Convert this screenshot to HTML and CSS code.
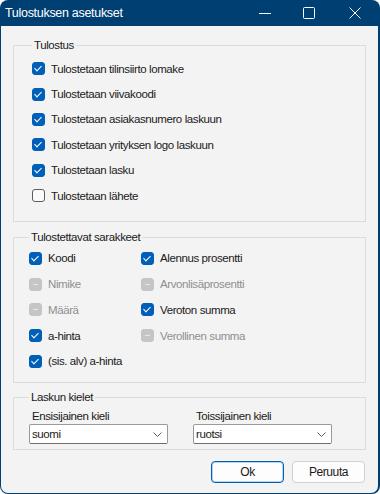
FILE: index.html
```html
<!DOCTYPE html>
<html lang="fi">
<head>
  <meta charset="UTF-8">
  <meta name="viewport" content="width=device-width, initial-scale=1.0">
  <title>Tulostuksen asetukset</title>
  <link rel="stylesheet" href="styles.css">
</head>
<body>
  <div class="window">
    <div class="titlebar">
      <span class="title">Tulostuksen asetukset</span>
      <div class="controls">
        <span class="ctl min"><svg width="12" height="12" viewBox="0 0 12 12"><path d="M0 6.5h12" stroke="#fff" stroke-width="1"/></svg></span>
        <span class="ctl max"><svg width="12" height="12" viewBox="0 0 12 12"><rect x="0.5" y="0.5" width="11" height="11" rx="1" fill="none" stroke="#fff" stroke-width="1"/></svg></span>
        <span class="ctl close"><svg width="12" height="12" viewBox="0 0 12 12"><path d="M0.5 0.5l11 11M11.5 0.5l-11 11" stroke="#fff" stroke-width="1"/></svg></span>
      </div>
    </div>

    <div class="content">
      <fieldset class="group print">
        <legend>Tulostus</legend>
        <label class="check"><span class="box on"></span>Tulostetaan tilinsiirto lomake</label>
        <label class="check"><span class="box on"></span>Tulostetaan viivakoodi</label>
        <label class="check"><span class="box on"></span>Tulostetaan asiakasnumero laskuun</label>
        <label class="check"><span class="box on"></span>Tulostetaan yrityksen logo laskuun</label>
        <label class="check"><span class="box on"></span>Tulostetaan lasku</label>
        <label class="check"><span class="box"></span>Tulostetaan lähete</label>
      </fieldset>

      <fieldset class="group columns">
        <legend>Tulostettavat sarakkeet</legend>
        <div class="col col-left">
          <label class="check"><span class="box on"></span>Koodi</label>
          <label class="check disabled"><span class="box dis"></span>Nimike</label>
          <label class="check disabled"><span class="box dis"></span>Määrä</label>
          <label class="check"><span class="box on"></span>a-hinta</label>
          <label class="check"><span class="box on"></span>(sis. alv) a-hinta</label>
        </div>
        <div class="col">
          <label class="check"><span class="box on"></span>Alennus prosentti</label>
          <label class="check disabled"><span class="box dis"></span>Arvonlisäprosentti</label>
          <label class="check"><span class="box on"></span>Veroton summa</label>
          <label class="check disabled"><span class="box dis"></span>Verollinen summa</label>
        </div>
      </fieldset>

      <fieldset class="group langs">
        <legend>Laskun kielet</legend>
        <div class="field">
          <span class="field-label">Ensisijainen kieli</span>
          <div class="select">suomi<svg width="9" height="5" viewBox="0 0 9 5"><path d="M0.5 0.5l4 4 4-4" fill="none" stroke="#606060" stroke-width="1"/></svg></div>
        </div>
        <div class="field">
          <span class="field-label">Toissijainen kieli</span>
          <div class="select">ruotsi<svg width="9" height="5" viewBox="0 0 9 5"><path d="M0.5 0.5l4 4 4-4" fill="none" stroke="#606060" stroke-width="1"/></svg></div>
        </div>
      </fieldset>

      <div class="buttons">
        <button class="btn primary">Ok</button>
        <button class="btn">Peruuta</button>
      </div>
    </div>
  </div>
</body>
</html>
```

FILE: styles.css
```css
* {
  margin: 0;
  padding: 0;
  box-sizing: border-box;
}

body {
  background-color: #ffffff;
  font-family: "Liberation Sans", Arial, sans-serif;
  font-size: 11.5px;
  letter-spacing: -0.4px;
  color: #1a1a1a;
}

.window {
  width: 380px;
  height: 494px;
  display: flex;
  flex-direction: column;
  background-color: #003f72;
  border-radius: 8px;
  padding: 0 2px 1px 1px;
  overflow: hidden;
}

.titlebar {
  height: 26px;
  display: flex;
  align-items: center;
  justify-content: space-between;
  padding-left: 4px;
  color: #ffffff;
}

.title {
  font-size: 12.5px;
  letter-spacing: -0.3px;
}

.controls {
  display: flex;
  height: 100%;
}

.ctl {
  width: 46px;
  display: flex;
  align-items: center;
  justify-content: center;
}

.ctl.min {
  margin-right: -2px;
}

.content {
  flex: 1;
  background-color: #f3f3f3;
  padding: 12px 12px 0 12px;
  border-radius: 0 0 7px 7px;
}

.group {
  border: 1px solid #dcdcdc;
  padding: 0 0 0 7px;
}

.group legend {
  padding: 0 2px;
  line-height: 14px;
}

.print {
  padding: 4px 0 13px 18px;
}

.check {
  display: flex;
  align-items: center;
  height: 25.4px;
}

.box {
  width: 13px;
  height: 13px;
  margin-right: 6px;
  border-radius: 3px;
  border: 1px solid #5d5d5d;
  background-color: #fbfbfb;
  position: relative;
}

.box.on {
  background-color: #005fb8;
  border-color: #005fb8;
}

.box.on::after {
  content: "";
  position: absolute;
  left: 3px;
  top: 1px;
  width: 3px;
  height: 6px;
  border: solid #ffffff;
  border-width: 0 1px 1px 0;
  transform: rotate(45deg);
}

.box.dis {
  background-color: #c5c5c5;
  border-color: #c5c5c5;
}

.box.dis::after {
  content: "";
  position: absolute;
  left: 3px;
  top: 5px;
  width: 5px;
  height: 1px;
  background-color: #e8e8e8;
}

.disabled {
  color: #8f8f8f;
}

.columns {
  margin-top: 8px;
  display: flex;
  padding: 1px 0 8px 15px;
}

.columns .check {
  height: 25.8px;
}

.col-left {
  width: 112px;
}

.langs {
  margin-top: 7px;
  display: flex;
  gap: 25px;
  padding: 4px 0 5px 15px;
}

.field {
  display: flex;
  flex-direction: column;
}

.field-label {
  padding-left: 3px;
  line-height: 16px;
}

.select {
  width: 139px;
  height: 20px;
  display: flex;
  align-items: center;
  justify-content: space-between;
  padding: 0 5px 0 2px;
  background-color: #ffffff;
  border: 1px solid #9a9a9a;
  border-bottom-color: #6e6e6e;
  border-radius: 2px;
}

.buttons {
  display: flex;
  justify-content: flex-end;
  gap: 8px;
  margin-top: 11px;
  padding-right: 1px;
}

.btn {
  width: 73px;
  height: 22px;
  font-family: inherit;
  font-size: 12px;
  letter-spacing: inherit;
  color: #1a1a1a;
  background-color: #fdfdfd;
  border: 1px solid #d0d0d0;
  border-radius: 4px;
}

.btn.primary {
  border-color: #005fb8;
  box-shadow: inset 0 0 0 1px #b9d3ec;
}
```
